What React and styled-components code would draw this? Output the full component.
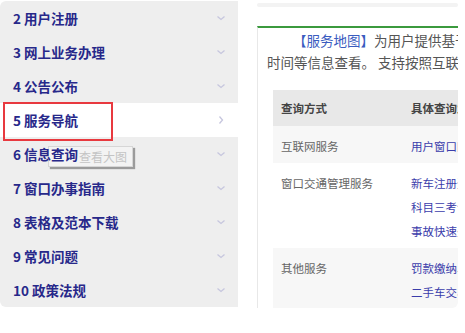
import React from 'react';
import styled, { createGlobalStyle } from 'styled-components';

const GlobalStyle = createGlobalStyle`
  html, body {
    margin: 0;
    padding: 0;
    background: #fff;
    font-family: "Noto Sans CJK SC", "Noto Sans", "Liberation Sans", sans-serif;
  }
`;

const Page = styled.div`
  display: flex;
  align-items: flex-start;
  width: 465px;
  height: 333px;
  overflow: hidden;
`;

const Side = styled.ul`
  position: relative;
  list-style: none;
  margin: 1px 0 0 0;
  padding: 0;
  width: 238px;
  background: #eeeeee;
  border-radius: 6px 0 0 6px;
`;

const Item = styled.li`
  position: relative;
  display: flex;
  align-items: center;
  justify-content: space-between;
  height: 34px;
  padding: 0 12px 0 13px;
  box-sizing: border-box;
  background: ${p => (p.$active ? '#fff' : 'transparent')};
`;

const Label = styled.span`
  position: relative;
  z-index: 2;
  font-size: 13.5px;
  font-weight: 700;
  color: #27288a;
  white-space: nowrap;
`;

const Chevron = styled.svg`
  width: 10px;
  height: 10px;
  fill: none;
  stroke: #c6c6de;
  stroke-width: 1.3;
`;

const Highlight = styled.div`
  position: absolute;
  left: 3px;
  top: 101px;
  width: 110px;
  height: 39px;
  border: 2px solid #e8393f;
  box-sizing: border-box;
  z-index: 3;
`;

const Tip = styled.div`
  position: absolute;
  left: 48px;
  top: 145px;
  width: 85px;
  height: 21px;
  box-sizing: border-box;
  padding-left: 30px;
  background: #f3f3f3;
  border: 1px solid #d6d6d6;
  box-shadow: 2px 2px 1px rgba(0, 0, 0, 0.35);
  font-size: 12px;
  line-height: 19px;
  color: #c4c4c4;
  z-index: 1;
`;

const Panel = styled.div`
  margin-left: 19px;
  width: 201px;
  display: flex;
  flex-direction: column;
`;

const TopStrip = styled.div`
  margin-top: 3px;
  height: 4px;
  background: #f3f3f3;
  border-radius: 2px;
`;

const Content = styled.div`
  margin-top: 19px;
  height: 282px;
  border-top: 2px solid #3b9a3e;
  border-left: 1px solid #e8e8e8;
  border-bottom-right-radius: 6px;
  overflow: hidden;
  padding-left: 9px;
  box-sizing: border-box;
`;

const Intro = styled.p`
  margin: 1px 0 0;
  font-size: 13.5px;
  line-height: 22px;
  color: #555;
  white-space: nowrap;
  & span {
    color: #3a5cbf;
  }
`;

const Indent = styled.span`
  display: inline-block;
  width: 26px;
`;

const Table = styled.table`
  margin: 17px 0 0 6px;
  border-collapse: collapse;
  width: 330px;
  font-size: 11.5px;
  & th, & td {
    text-align: left;
    vertical-align: top;
    padding: 8px 8px 5px;
    line-height: 24px;
    white-space: nowrap;
  }
  & th {
    background: #e8e8e8;
    color: #444;
    font-weight: 700;
    padding: 6px 8px;
  }
  & td:first-child, & th:first-child {
    width: 114px;
  }
  & td:first-child {
    color: #666;
  }
`;

const Row = styled.tr`
  background: ${p => (p.$shade ? '#f7f7f7' : '#fff')};
`;

const Link = styled.div`
  color: #3b3dab;
`;

const Down = () => (
  <Chevron viewBox="0 0 10 10"><path d="M1.5 3.5 L5 6.5 L8.5 3.5" /></Chevron>
);
const Right = () => (
  <Chevron viewBox="0 0 10 10"><path d="M3.5 1.5 L6.5 5 L3.5 8.5" /></Chevron>
);

const items = ['2 用户注册', '3 网上业务办理', '4 公告公布', '5 服务导航', '6 信息查询', '7 窗口办事指南', '8 表格及范本下载', '9 常见问题', '10 政策法规'];

const rows = [
  { type: '互联网服务', links: ['用户窗口网上办事大厅'] },
  { type: '窗口交通管理服务', links: ['新车注册登记业务', '科目三考试预约', '事故快速处理'] },
  { type: '其他服务', links: ['罚款缴纳、违法处理', '二手车交易登记'] }
];

const App = () => (
  <>
    <GlobalStyle />
    <Page>
      <Side>
        {items.map(t => (
          <Item key={t} $active={t.startsWith('5 ')}>
            <Label>{t}</Label>
            {t.startsWith('5 ') ? <Right /> : <Down />}
          </Item>
        ))}
        <Highlight />
        <Tip>查看大图</Tip>
      </Side>
      <Panel>
        <TopStrip />
        <Content>
          <Intro>
            <Indent /><span>【服务地图】</span>为用户提供基于地图的办事网点<br />
            时间等信息查看。 支持按照互联网服务查询
          </Intro>
          <Table>
            <thead>
              <tr><th>查询方式</th><th>具体查询业务</th></tr>
            </thead>
            <tbody>
              {rows.map((r, i) => (
                <Row key={r.type} $shade={i !== 1}>
                  <td>{r.type}</td>
                  <td>{r.links.map(l => <Link key={l}>{l}</Link>)}</td>
                </Row>
              ))}
            </tbody>
          </Table>
        </Content>
      </Panel>
    </Page>
  </>
);

export default App;
